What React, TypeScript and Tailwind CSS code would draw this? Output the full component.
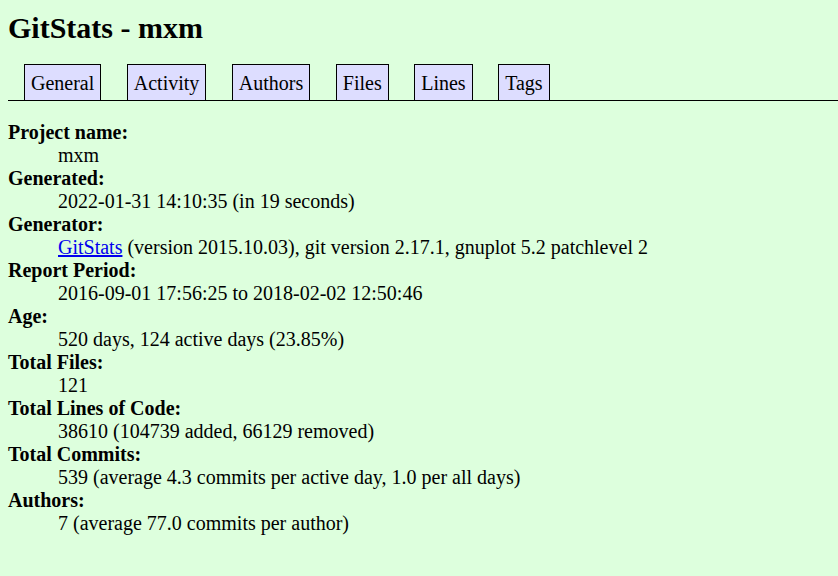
import React from "react";

const tabs = ["General", "Activity", "Authors", "Files", "Lines", "Tags"];

const rows: { label: string; value: React.ReactNode }[] = [
  { label: "Project name:", value: "mxm" },
  { label: "Generated:", value: "2022-01-31 14:10:35 (in 19 seconds)" },
  {
    label: "Generator:",
    value: (
      <>
        <a href="#" className="text-[#0000ee] underline">GitStats</a> (version 2015.10.03), git version 2.17.1, gnuplot 5.2 patchlevel 2
      </>
    ),
  },
  { label: "Report Period:", value: "2016-09-01 17:56:25 to 2018-02-02 12:50:46" },
  { label: "Age:", value: "520 days, 124 active days (23.85%)" },
  { label: "Total Files:", value: "121" },
  { label: "Total Lines of Code:", value: "38610 (104739 added, 66129 removed)" },
  { label: "Total Commits:", value: "539 (average 4.3 commits per active day, 1.0 per all days)" },
  { label: "Authors:", value: "7 (average 77.0 commits per author)" },
];

export default function App() {
  return (
    <div className="min-h-screen w-full bg-[#ddffdd] pt-[11px] pl-2 text-black font-['Liberation_Serif',serif]">
      <h1 className="text-[30px] leading-[34px] font-bold">GitStats - mxm</h1>
      <div className="mt-[19px] flex items-end gap-[25.5px] border-b border-black pl-4 h-[37px]">
        {tabs.map((t) => (
          <div
            key={t}
            className="h-[36px] border-x border-t border-black bg-[#ddddff] px-[6px] pt-[7px] text-[20px] leading-[23px] whitespace-nowrap"
          >
            {t}
          </div>
        ))}
      </div>
      <dl className="mt-[20px] text-[20px] leading-[23px]">
        {rows.map((r) => (
          <React.Fragment key={r.label}>
            <dt className="font-bold">{r.label}</dt>
            <dd className="ml-[50px]">{r.value}</dd>
          </React.Fragment>
        ))}
      </dl>
    </div>
  );
}
